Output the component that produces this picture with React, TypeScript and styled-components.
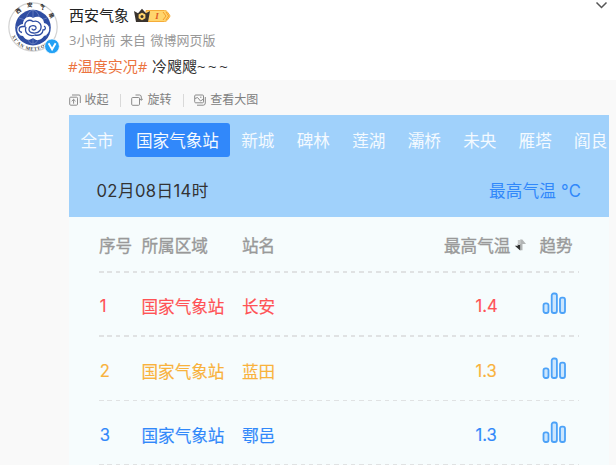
import { FC } from "react";
import styled, { createGlobalStyle } from "styled-components";

const GlobalStyle = createGlobalStyle`
  * {
    box-sizing: border-box;
  }
  body {
    margin: 0;
    background: #fff;
    overflow: hidden;
    font-family: "Open Sans", "Noto Sans CJK SC", sans-serif;
  }
`;

const Page = styled.div`
  width: 616px;
  height: 465px;
  display: flex;
  flex-direction: column;
  overflow: hidden;
`;

const PostHead = styled.header`
  height: 80px;
  flex: none;
  display: flex;
  padding: 0 8px;
`;

const Avatar = styled.div`
  width: 61px;
  flex: none;
  padding-top: 1px;
`;

const PostInfo = styled.div`
  flex: 1;
  padding-top: 4px;
`;

const NameRow = styled.div`
  height: 22px;
  display: flex;
  align-items: center;
  gap: 4px;
  font-size: 15px;
  line-height: 22px;
  color: #222;

  svg {
    margin-top: 1px;
  }
`;

const Meta = styled.div`
  display: flex;
  gap: 4.5px;
  margin-top: 4px;
  font-size: 13px;
  line-height: 20px;
  color: #999;
`;

const PostText = styled.div`
  display: flex;
  margin-top: 5px;
  font-size: 15px;
  line-height: 22px;
  color: #333;
`;

const Topic = styled.span`
  margin: 0 4.5px 0 -1px;
  color: #eb7340;
`;

const Tildes = styled.span`
  letter-spacing: 2.6px;
`;

const Chevron = styled.svg`
  flex: none;
  margin-top: 1px;
  width: 13px;
  height: 8px;
`;

const Media = styled.main`
  flex: 1;
  padding: 0 7px 0 69px;
  background: #f9f9f9;
`;

const Toolbar = styled.div`
  height: 35px;
  display: flex;
  align-items: center;
  padding-top: 5px;
`;

const Tool = styled.div`
  display: flex;
  align-items: center;
  gap: 4px;
  font-size: 12px;
  line-height: 16px;
  color: #808080;

  svg {
    width: 12px;
    height: 12px;
    margin-left: -0.5px;
  }
`;

const Divider = styled.i`
  width: 1px;
  height: 13px;
  margin: 0 11.2px;
  background: #d9d9d9;
`;

const Board = styled.section`
  height: 360px;
  background: #f6fcfd;
  font-family: Inter, "Noto Sans CJK SC", sans-serif;
  font-size: 16.6px;
`;

const BoardHead = styled.div`
  height: 102px;
  padding-top: 7.5px;
  background: #a0d1fb;
`;

const Tabs = styled.nav`
  display: flex;
  padding-left: 0.4px;
  overflow: hidden;
`;

const Tab = styled.span<{ $active?: boolean }>`
  flex: none;
  height: 34.5px;
  padding: 0 11.15px;
  border-radius: 3px;
  line-height: 36px;
  color: #f4faff;
  background: ${({ $active }) => ($active ? "#3188fa" : "transparent")};
`;

const DateRow = styled.div`
  display: flex;
  justify-content: space-between;
  padding: 22px 28px 0 27.5px;
  line-height: 24px;
  color: #333;
`;

const DateText = styled.span`
  letter-spacing: 0.4px;
`;

const Unit = styled.span`
  letter-spacing: 0.2px;
  color: #3188fa;
`;

const Table = styled.div`
  padding: 0 30px;
`;

const Row = styled.div<{ $color: string; $head?: boolean }>`
  position: relative;
  display: grid;
  grid-template-columns: 42.5px 100.5px 1fr 96px 39.5px;
  align-items: center;
  height: ${({ $head }) => ($head ? "55.6px" : "64.4px")};
  padding-top: ${({ $head }) => ($head ? "1px" : "3px")};
  -webkit-text-stroke: ${({ $head }) => ($head ? "0.35px" : "0.15px")};
  white-space: nowrap;
  color: ${({ $color }) => $color};

  &::after {
    content: "";
    position: absolute;
    left: 0;
    right: 0;
    bottom: 0;
    height: 1.6px;
    background: repeating-linear-gradient(
      90deg,
      #e0e2e3 0 4.5px,
      transparent 4.5px 8.4px
    );
  }
`;

const SortHead = styled.span`
  display: flex;
  align-items: center;
  gap: 4px;
  margin-left: 0.5px;
`;

const Rank = styled.span`
  padding-left: 0.8px;
`;

const Value = styled.span`
  padding-left: 32px;
`;

const TrendIcon = styled.svg`
  width: 25px;
  height: 23px;
  margin: -5px 0 0 2px;
`;

const TABS = ["全市", "国家气象站", "新城", "碑林", "莲湖", "灞桥", "未央", "雁塔", "阎良"];

const STATIONS = [
  { rank: 1, name: "长安", temp: "1.4", color: "#ff5255" },
  { rank: 2, name: "蓝田", temp: "1.3", color: "#f9b23c" },
  { rank: 3, name: "鄠邑", temp: "1.3", color: "#3188fa" },
];

const AvatarLogo: FC = () => (
  <svg width="54" height="54" viewBox="0 0 54 54">
    <defs>
      <path id="top-arc" d="M6 25a19 19 0 0 1 38 0" />
      <path id="bottom-arc" d="M2.5 27a22.5 22.5 0 0 0 45 0" />
    </defs>
    <circle cx="25" cy="26" r="24.2" fill="#fff" stroke="#d2d2d2" strokeWidth="1.2" />
    <circle cx="25" cy="26.6" r="17.8" fill="#2e4da3" />
    <g fill="none" stroke="#8396cb" strokeWidth=".6">
      <ellipse cx="25" cy="26" rx="8" ry="17" />
      <path d="M8 26h34M25 9v34M11 17q14 6 28 0M11 35q14-6 28 0" />
    </g>
    <path
      d="M15 35c-7-1-8-11 0-12 0-6 6-9 10-6 5-3 11 0 11 5 7 1 7 11 0 13-3 5-8 5-11 2-4 3-8 2-10-2z"
      fill="#fff"
    />
    <path
      d="M14 31.5c-4-1-4-6 1-6h2c-1-5 4-8 8-5 6-2 10 4 7 9-3 4-11 3-11-1 0-5 8-5 7-1-1 2-4 2-4 0M18 26c-2 6 3 10 9 8 4 1 8-1 8-5 3 0 3-3 1-4"
      fill="none"
      stroke="#2e4da3"
      strokeWidth="1.3"
    />
    <text fontSize="5.5" fontWeight="700" fill="#222" letterSpacing="6">
      <textPath href="#top-arc" startOffset="12">西安气象</textPath>
    </text>
    <text fontSize="4.8" fontWeight="700" fill="#444" letterSpacing=".7" fontFamily="Liberation Serif">
      <textPath href="#bottom-arc" startOffset="8">XI'AN METEORO</textPath>
    </text>
    <circle cx="44" cy="45.3" r="7.4" fill="#22a1f5" stroke="#fff" strokeWidth=".8" />
    <path d="M40.6 42.3l3.5 6 3.5-6" fill="none" stroke="#fff" strokeWidth="1.9" />
  </svg>
);

const VipBadge: FC = () => (
  <svg width="39" height="15" viewBox="0 0 39 15">
    <path d="M13 2.5h18.5q2 0 3.2 1.8l2 3q.5.7 0 1.4l-2 3q-1.2 1.8-3.2 1.8H13z" fill="#ffd56d" stroke="#f6ac38" />
    <path d="M30 4l3 4-3 4M33 4l2.6 4-2.6 4" fill="none" stroke="#f49b2b" />
    <path d="M1 3l4 2.3L9 .8l4 4.5L17 3l-2 11H3z" fill="#39332e" />
    <path d="M9 4.7l3.4 1.8v3.8L9 12.3l-3.4-2V6.5z" fill="#ffd36b" />
    <circle cx="9" cy="8.5" r="1.5" fill="#39332e" />
    <text x="22.3" y="11.2" fontSize="9" fontWeight="700" fontStyle="italic" fill="#dd5827" fontFamily="Liberation Serif">
      I
    </text>
  </svg>
);

const CollapseIcon: FC = () => (
  <svg viewBox="0 0 12 12" fill="none" stroke="#8b8b8b">
    <rect x=".7" y="3.2" width="7.8" height="8" rx="1" />
    <path d="M3 1h7q1.3 0 1.3 1.3V9M4.6 9.7V5.4M2.7 7.2l1.9-1.9 1.9 1.9" />
  </svg>
);

const RotateIcon: FC = () => (
  <svg viewBox="0 0 12 12" fill="none" stroke="#8b8b8b">
    <rect x=".7" y="3.5" width="7.8" height="7.8" rx="1" />
    <path d="M4.5 1h4q1.8 0 1.8 2v3M8.5 4.6l1.8 1.8L12 4.6" />
  </svg>
);

const ViewIcon: FC = () => (
  <svg viewBox="0 0 12 12" fill="none" stroke="#8b8b8b">
    <rect x=".7" y="1" width="8.8" height="7.8" rx="1" />
    <path d="M1 4.5l2.5-1 3 3.5 2.7-1.8M6 3.2h1.5M11.3 3v6q0 2.2-2 2.2H3" />
  </svg>
);

const SortIcon: FC = () => (
  <svg width="13" height="14" viewBox="0 0 13 14">
    <path d="M6.2 1.5v10.7h2.3V6H12L8.3 1.5z" fill="#b2b5b5" />
    <path d="M3.8 6h2.4v6.5L.8 7.7h3z" fill="#303232" />
    <path d="M3.8 2h2.4v5H3.8z" fill="#c6c9c9" />
  </svg>
);

const Trend: FC = () => (
  <TrendIcon viewBox="0 0 25 23" fill="#cce6fd" stroke="#4ca2f8" strokeWidth="1.8">
    <rect x="1.5" y="11.3" width="5" height="9.7" rx="2" />
    <rect x="9.7" y="1.5" width="5.2" height="19.5" rx="2" />
    <rect x="18" y="5.6" width="5" height="15.4" rx="2" />
  </TrendIcon>
);

const App: FC = () => (
  <Page>
    <GlobalStyle />
    <PostHead>
      <Avatar>
        <AvatarLogo />
      </Avatar>
      <PostInfo>
        <NameRow>
          西安气象
          <VipBadge />
        </NameRow>
        <Meta>
          <span>3小时前</span>
          <span>来自</span>
          <span>微博网页版</span>
        </Meta>
        <PostText>
          <Topic>#温度实况#</Topic>
          冷飕飕<Tildes>~~~</Tildes>
        </PostText>
      </PostInfo>
      <Chevron viewBox="0 0 13 8" fill="none" stroke="#555" strokeWidth="1.5">
        <path d="M1.5 1.5l5 5 5-5" />
      </Chevron>
    </PostHead>
    <Media>
      <Toolbar>
        <Tool>
          <CollapseIcon />
          收起
        </Tool>
        <Divider />
        <Tool>
          <RotateIcon />
          旋转
        </Tool>
        <Divider />
        <Tool>
          <ViewIcon />
          查看大图
        </Tool>
      </Toolbar>
      <Board>
        <BoardHead>
          <Tabs>
            {TABS.map(t => (
              <Tab key={t} $active={t === "国家气象站"}>
                {t}
              </Tab>
            ))}
          </Tabs>
          <DateRow>
            <DateText>02月08日14时</DateText>
            <Unit>最高气温 °C</Unit>
          </DateRow>
        </BoardHead>
        <Table>
          <Row $color="#999" $head>
            <span>序号</span>
            <span>所属区域</span>
            <span>站名</span>
            <SortHead>
              最高气温
              <SortIcon />
            </SortHead>
            <span>趋势</span>
          </Row>
          {STATIONS.map(s => (
            <Row key={s.rank} $color={s.color}>
              <Rank>{s.rank}</Rank>
              <span>国家气象站</span>
              <span>{s.name}</span>
              <Value>{s.temp}</Value>
              <Trend />
            </Row>
          ))}
        </Table>
      </Board>
    </Media>
  </Page>
);

export default App;
